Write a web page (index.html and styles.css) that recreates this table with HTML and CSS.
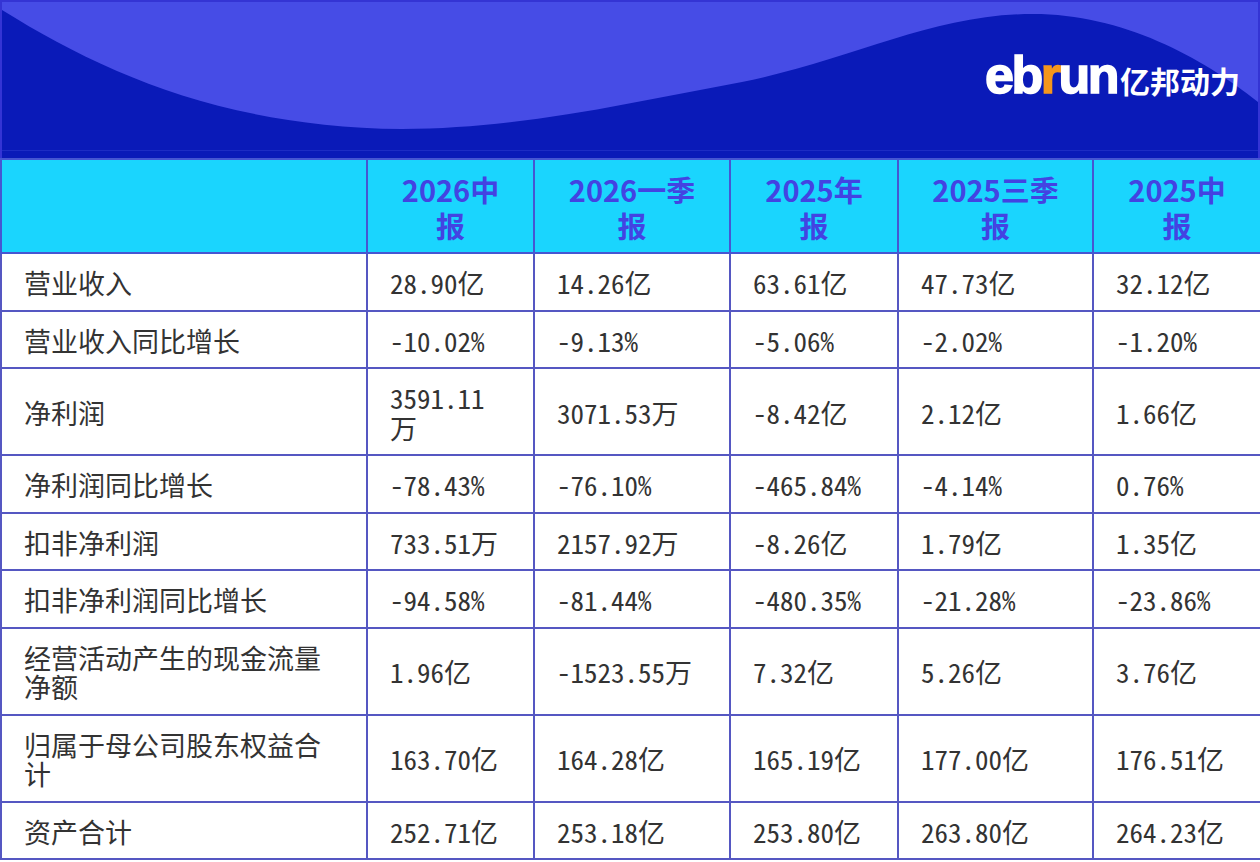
FILE: index.html
```html
<!DOCTYPE html>
<html lang="zh-CN">
<head>
<meta charset="utf-8">
<title>财务数据</title>
<link rel="stylesheet" href="styles.css">
</head>
<body>
<div class="card">
  <header class="banner">
    <svg class="wave" viewBox="0 0 1256 156" preserveAspectRatio="none" aria-hidden="true">
      <rect x="0" y="0" width="1256" height="156" fill="#0a1ab8"/>
      <path d="M0,8 C100,70 220,125 400,127 C520,127 630,100 740,80 C850,58 930,12 1031,12 C1120,12 1200,55 1256,100 L1256,0 L0,0 Z" fill="#464ce6"/>
      <rect x="0" y="148" width="1256" height="1" fill="#1d2cc4"/>
    </svg>
    <div class="logo">
      <span class="logo-en">eb<span class="logo-r">r</span>un</span><span class="logo-cn">亿邦动力</span>
    </div>
  </header>
  <table class="fin">
    <colgroup>
      <col class="c-label">
      <col class="c-a">
      <col class="c-b">
      <col class="c-c">
      <col class="c-d">
      <col class="c-e">
    </colgroup>
    <thead>
      <tr>
        <th></th>
        <th>2026中<br>报</th>
        <th>2026一季<br>报</th>
        <th>2025年<br>报</th>
        <th>2025三季<br>报</th>
        <th>2025中<br>报</th>
      </tr>
    </thead>
    <tbody>
      <tr><td>营业收入</td><td>28.90亿</td><td>14.26亿</td><td>63.61亿</td><td>47.73亿</td><td>32.12亿</td></tr>
      <tr><td>营业收入同比增长</td><td>-10.02%</td><td>-9.13%</td><td>-5.06%</td><td>-2.02%</td><td>-1.20%</td></tr>
      <tr><td>净利润</td><td>3591.11万</td><td>3071.53万</td><td>-8.42亿</td><td>2.12亿</td><td>1.66亿</td></tr>
      <tr><td>净利润同比增长</td><td>-78.43%</td><td>-76.10%</td><td>-465.84%</td><td>-4.14%</td><td>0.76%</td></tr>
      <tr><td>扣非净利润</td><td>733.51万</td><td>2157.92万</td><td>-8.26亿</td><td>1.79亿</td><td>1.35亿</td></tr>
      <tr><td>扣非净利润同比增长</td><td>-94.58%</td><td>-81.44%</td><td>-480.35%</td><td>-21.28%</td><td>-23.86%</td></tr>
      <tr><td>经营活动产生的现金流量净额</td><td>1.96亿</td><td>-1523.55万</td><td>7.32亿</td><td>5.26亿</td><td>3.76亿</td></tr>
      <tr><td>归属于母公司股东权益合计</td><td>163.70亿</td><td>164.28亿</td><td>165.19亿</td><td>177.00亿</td><td>176.51亿</td></tr>
      <tr><td>资产合计</td><td>252.71亿</td><td>253.18亿</td><td>253.80亿</td><td>263.80亿</td><td>264.23亿</td></tr>
    </tbody>
  </table>
</div>
</body>
</html>
```

FILE: styles.css
```css
* { box-sizing: border-box; }

body {
  margin: 0;
  background: #ffffff;
}

.card {
  width: 1260px;
}

.banner {
  position: relative;
  height: 158px;
  border: 2px solid #3434d4;
  border-bottom: 0;
  overflow: hidden;
  display: flex;
  justify-content: flex-end;
  align-items: center;
  padding: 0 18px 10px 0;
  background: #0a1ab8;
}

.wave {
  position: absolute;
  left: 0;
  top: 0;
  width: 100%;
  height: 100%;
}

.logo {
  position: relative;
  display: flex;
  align-items: baseline;
  color: #ffffff;
}

.logo-en {
  font-family: "Liberation Sans", Arial, sans-serif;
  font-weight: 700;
  font-size: 52px;
  letter-spacing: -2.5px;
  line-height: 1;
  -webkit-text-stroke: 1.5px #ffffff;
}

.logo-r {
  color: #f5961d;
  -webkit-text-stroke: 1.5px #f5961d;
}

.logo-cn {
  font-family: "Noto Sans CJK SC", sans-serif;
  font-weight: 700;
  font-size: 30px;
  line-height: 1;
  margin-left: 3px;
}

.fin {
  width: 1260px;
  border-collapse: collapse;
  table-layout: fixed;
}

.c-label { width: 366px; }
.c-a { width: 167px; }
.c-b { width: 196px; }
.c-c { width: 168px; }
.c-d { width: 195px; }
.c-e { width: 168px; }

.fin th {
  background: #1ad5fe;
  color: #4343e2;
  font-family: "Noto Sans CJK SC", sans-serif;
  font-weight: 700;
  font-size: 29px;
  line-height: 36px;
  padding: 11px 4px 9px;
  text-align: center;
  vertical-align: middle;
  border: 2px solid #4656d2;
}

.fin td {
  border: 2px solid #5557c2;
  padding: 14px 30px 12px 22px;
  font-family: "Noto Sans CJK SC", sans-serif;
  font-feature-settings: "hwid" 1;
  font-size: 27px;
  line-height: 29.5px;
  color: #333333;
  text-align: left;
  vertical-align: middle;
}
```
